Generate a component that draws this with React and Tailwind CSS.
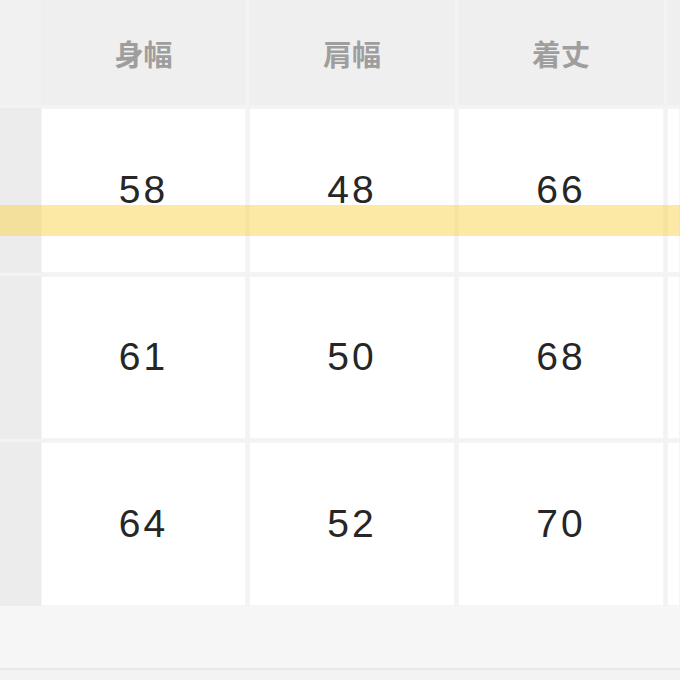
import React from 'react';

const headers = ['身幅', '肩幅', '着丈'];

const rows = [
  ['58', '48', '66'],
  ['61', '50', '68'],
  ['64', '52', '70'],
];

const rowHeights = ['h-[165px]', 'h-[163px]', 'h-[164px]'];

export default function App() {
  return (
    <div
      className="relative w-[680px] h-[680px] overflow-hidden bg-[#f3f3f3]"
      style={{ fontFamily: '"Liberation Sans", "Noto Sans CJK JP", sans-serif' }}
    >
      <div className="grid grid-cols-[41px_208px_209px_209px_1fr] gap-y-[3px]">
        {/* header row */}
        <div className="h-[105px] bg-[#f1f1f1]" />
        {headers.map((h) => (
          <div
            key={h}
            className="h-[105px] mr-[3px] bg-[#efefef] flex items-center justify-center pt-[2px] text-[29px] font-bold text-[#9e9e9e]"
            style={{ fontFamily: '"Noto Sans CJK JP", sans-serif' }}
          >
            {h}
          </div>
        ))}
        <div className="h-[105px] bg-[#efefef]" />

        {/* body rows */}
        {rows.map((r, i) => (
          <React.Fragment key={i}>
            <div className={`${rowHeights[i]} bg-[#ececec]`} />
            {r.map((v, j) => (
              <div
                key={j}
                className={`${rowHeights[i]} mr-[3px] bg-white border border-[#f5f5f5] flex items-center justify-center text-[39px] tracking-[3px] text-[#262626]`}
              >
                {v}
              </div>
            ))}
            <div className={`${rowHeights[i]} bg-white border border-[#f5f5f5]`} />
          </React.Fragment>
        ))}
      </div>

      {/* footer strip */}
      <div className="h-[64px] bg-[#f6f6f6] border-b-2 border-[#e9e9e9]" />

      {/* highlight band */}
      <div className="absolute left-0 right-0 top-[205px] h-[31px] bg-[#fcd34d]/50" />
    </div>
  );
}
